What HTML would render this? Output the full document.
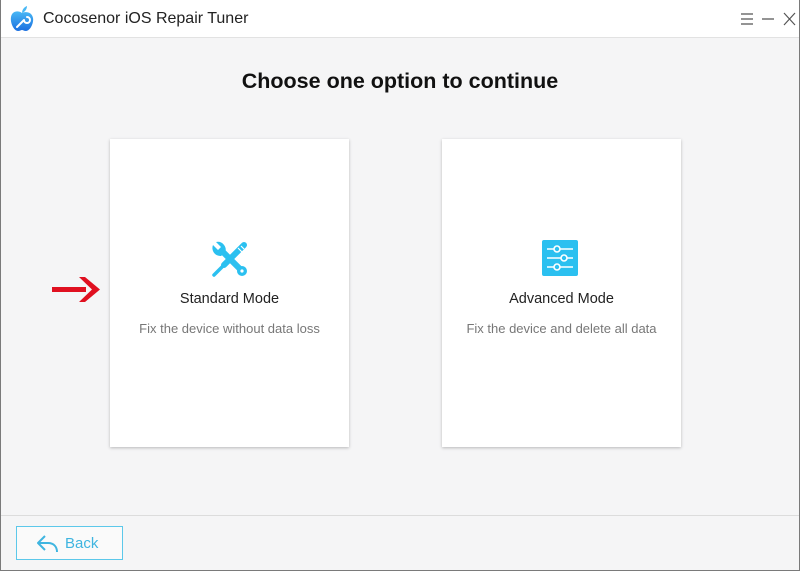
<!DOCTYPE html>
<html><head><style>
*{margin:0;padding:0;box-sizing:border-box}
body{width:800px;height:571px;overflow:hidden;background:#f5f5f6;font-family:"Liberation Sans",sans-serif;position:relative}
.frame{position:absolute;inset:0;border:1px solid #7a7a7a;border-top:none}
.title{position:absolute;left:0;top:0;width:800px;height:38px;background:#fff;border-bottom:1px solid #e2e2e2}
.title span{position:absolute;left:43px;top:10px;font-size:16px;color:#222}
.h{position:absolute;top:69px;width:800px;text-align:center;font-size:21.5px;font-weight:bold;color:#111}
.card{position:absolute;top:139px;width:239px;height:308px;background:#fff;box-shadow:0 1px 3px rgba(0,0,0,.25)}
.card .t{position:absolute;top:152px;width:100%;text-align:center;font-size:14.5px;color:#222}
.card .s{position:absolute;top:182px;width:100%;text-align:center;font-size:13px;color:#777}
.card svg{position:absolute;left:100px;top:101px}
.foot{position:absolute;left:1px;top:515px;width:798px;border-top:1px solid #dcdcdc}
.back{position:absolute;left:16px;top:526px;width:107px;height:34px;border:1px solid #5cc8ea;background:#fafafa;color:#3fb5e0;font-size:15px}
.back span{position:absolute;left:48px;top:8px}
</style></head><body>
<div class="title">
<svg style="position:absolute;left:9px;top:5px" width="26" height="28" viewBox="0 0 26 28"><defs><linearGradient id="g" x1="0" y1="0" x2="0" y2="1"><stop offset="0" stop-color="#49b8f5"/><stop offset="1" stop-color="#1b6fe0"/></linearGradient></defs><path d="M13 8C9 5 3 6 2 12c-1 6 3 14 7 14 2 0 3-1 4-1s2 1 4 1c4 0 8-8 7-13-1-6-7-7-11-5z" fill="url(#g)"/><path d="M13 8c0-3 2-6 5-7 0 3-2 6-5 7z" fill="#49b8f5"/><path d="M8 22l7-7M15 15a3 3 0 1 0 3-3" stroke="#fff" stroke-width="2" fill="none" stroke-linecap="round"/></svg>
<span>Cocosenor iOS Repair Tuner</span>
<svg style="position:absolute;left:738px;top:11px" width="60" height="16"><g stroke="#555" stroke-width="1.2"><path d="M3 3h12M3 8h12M3 13h12M24 8h12M46 2l11 12M57 2L46 14"/></g></svg>
</div>
<div class="h">Choose one option to continue</div>
<svg style="position:absolute;left:50px;top:274px" width="52" height="32"><rect x="2" y="13" width="34" height="5" fill="#e01020"/><polygon points="29,3 35,3 50,15.5 35,28 29,28 42,15.5" fill="#e01020"/></svg>
<div class="card" style="left:110px">
<svg width="40" height="40" viewBox="0 0 40 40"><g stroke="#2bc0f0" stroke-linecap="round" fill="none">
<path d="M34 5L14 25" stroke-width="6"/>
<path d="M12 27L4 35" stroke-width="3.5"/>
<path d="M12 11L31 30" stroke-width="6"/>
</g>
<path d="M3 5 L8 10 L11 7 L6 2 A8 8 0 0 1 15 13 L11 16 A8 8 0 0 1 3 5Z" fill="#2bc0f0"/>
<circle cx="32" cy="31" r="5" fill="#2bc0f0"/><circle cx="32" cy="31" r="1.6" fill="#fff"/>
<path d="M28 8l4 4M31 6l3 3" stroke="#fff" stroke-width="1.2"/></svg>
<div class="t">Standard Mode</div><div class="s">Fix the device without data loss</div></div>
<div class="card" style="left:442px">
<svg width="38" height="38" viewBox="0 0 38 38"><rect x="0" y="0" width="36" height="36" rx="2" fill="#2bc0f0"/><g stroke="#fff" stroke-width="1.6" fill="#2bc0f0"><path d="M5 9h26M5 18h26M5 27h26"/><circle cx="15" cy="9" r="3"/><circle cx="22" cy="18" r="3"/><circle cx="15" cy="27" r="3"/></g></svg>
<div class="t">Advanced Mode</div><div class="s">Fix the device and delete all data</div></div>
<div class="foot"></div>
<div class="back"><svg style="position:absolute;left:19px;top:7px" width="24" height="20"><path d="M9 2L2 9l7 7M2 9h10c6 0 9 4 9 9" stroke="#3fb5e0" stroke-width="2" fill="none" stroke-linejoin="round"/></svg><span>Back</span></div>
<div class="frame"></div>
</body></html>
